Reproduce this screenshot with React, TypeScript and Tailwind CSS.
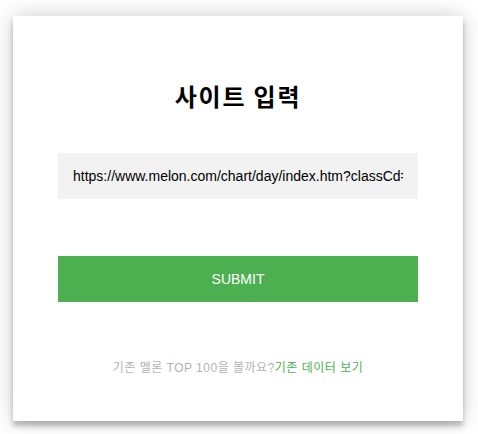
export default function App() {
  return (
    <div className="flex min-h-[434px] w-[478px] items-start bg-white pt-[16px] pl-[13px] font-['Liberation_Sans',Arial,'Noto_Sans_CJK_KR',sans-serif]">
      <div className="flex w-[450px] flex-col items-center bg-white p-[45px] text-center shadow-[0_0_20px_0_rgba(0,0,0,0.2),0_5px_5px_0_rgba(0,0,0,0.24)]">
        <h1 className="mt-[19px] h-[32px] font-['Noto_Sans_CJK_KR','Liberation_Sans',sans-serif] text-[24px] leading-[32px] font-bold tracking-[1.8px] text-black">
          사이트 입력
        </h1>
        <input
          type="text"
          readOnly
          defaultValue="https://www.melon.com/chart/day/index.htm?classCd=DM0000"
          className="mt-[41px] block h-[46px] w-[360px] border-0 bg-[#f2f2f2] px-[15px] font-['Liberation_Sans',Arial,sans-serif] text-[14px] text-black outline-none"
        />
        <button
          type="button"
          className="mt-[57px] block h-[46px] w-[360px] bg-[#4CAF50] font-['Liberation_Sans',Arial,sans-serif] text-[14px] uppercase text-white"
        >
          SUBMIT
        </button>
        <p className="mt-[58px] h-[16px] font-['Liberation_Sans','Noto_Sans_CJK_KR',sans-serif] text-[12px] leading-[16px] tracking-[0.5px] text-[#b3b3b3]">
          기존 멜론 TOP 100을 볼까요?<a href="#" className="text-[#4CAF50]">기존 데이터 보기</a>
        </p>
      </div>
    </div>
  );
}
